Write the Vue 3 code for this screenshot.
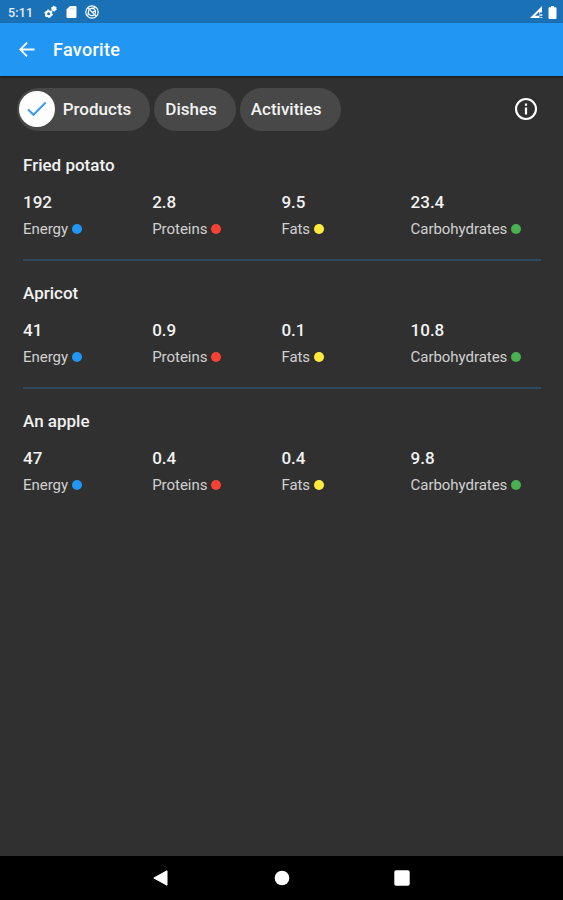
<script setup>
import { ref } from 'vue';

const tabs = ['Products', 'Dishes', 'Activities'];
const activeTab = ref('Products');

// Nutrients shown for every product, in column order
const nutrients = [
    { key: 'energy', label: 'Energy' },
    { key: 'proteins', label: 'Proteins' },
    { key: 'fats', label: 'Fats' },
    { key: 'carbohydrates', label: 'Carbohydrates' }
];

const products = ref([
    { name: 'Fried potato', energy: '192', proteins: '2.8', fats: '9.5', carbohydrates: '23.4' },
    { name: 'Apricot', energy: '41', proteins: '0.9', fats: '0.1', carbohydrates: '10.8' },
    { name: 'An apple', energy: '47', proteins: '0.4', fats: '0.4', carbohydrates: '9.8' }
]);
</script>

<template>
    <div class="screen">
        <div class="status-bar">
            <span class="clock">5:11</span>
            <!-- gears -->
            <svg class="gears" width="14" height="14" viewBox="0 0 14 14">
                <circle cx="4.600" cy="8.700" r="2.500" fill="none" stroke="#fff" stroke-width="2" />
                <circle cx="4.600" cy="8.700" r="3.700" fill="none" stroke="#fff" stroke-width="1.200" stroke-dasharray="1.900 1.970" />
                <circle cx="9.900" cy="3.700" r="1.500" fill="#d3e4f2" stroke="#fff" stroke-width="1.700" />
                <circle cx="9.900" cy="3.700" r="2.500" fill="none" stroke="#fff" stroke-width="1" stroke-dasharray="1.400 1.220" />
            </svg>
            <!-- memory card -->
            <svg class="card" width="11" height="12" viewBox="0 0 11 12">
                <path d="M4 0h5.500Q10.500 0 10.500 1v10q0 1-1 1h-8q-1 0-1-1V3.500z" fill="#fff" />
                <path d="M4.200 2v1.700M6.200 2v1.700M8.200 2v1.700" stroke="#b9d4ea" stroke-width=".8" />
            </svg>
            <svg class="globe" width="14" height="14" viewBox="0 0 14 14" fill="none" stroke="#fff">
                <circle cx="7" cy="7" r="6.200" stroke-width="1.200" />
                <circle cx="7" cy="7" r="3.600" stroke-width="1.100" />
                <path d="M2.500 2.500l9 9M6 3.500l4.500-.8M3.500 6.500l-.5 4M7.500 7.500l3-2" stroke-width="1.200" />
            </svg>
            <svg class="signal" width="13" height="13" viewBox="0 0 13 13">
                <path d="M0 12L12 0v6.500H9.500V12z" fill="#fff" />
                <path d="M5 9.700l4-4v4z" fill="#1b71b6" />
                <path d="M10.300 8l2 2m0-2l-2 2M10.300 11.500h2" stroke="#fff" stroke-width=".9" />
            </svg>
            <svg class="battery" width="9" height="13" viewBox="0 0 9 13">
                <path d="M3 0h3v1.300h1.500q1 0 1 1V12q0 1-1 1h-6q-1 0-1-1V2.300q0-1 1-1H3z" fill="#fff" />
            </svg>
        </div>

        <header class="app-bar">
            <svg class="back" width="16" height="16" viewBox="0 0 16 16" fill="none" stroke="#fff" stroke-width="1.900">
                <path d="M15.500 7.500H2M8 .7L1.300 7.500 8 14.300" />
            </svg>
            <h1>Favorite</h1>
        </header>

        <div class="filters">
            <button
                v-for="tab in tabs"
                :key="tab"
                class="chip"
                :class="{ selected: tab === activeTab }"
                @click="activeTab = tab"
            >
                <span v-if="tab === activeTab" class="check">
                    <svg width="20" height="16" viewBox="0 0 20 16" fill="none" stroke="#3a9af0" stroke-width="2">
                        <path d="M1 8.500l5.500 5.300L18.700 1.500" />
                    </svg>
                </span>
                <span class="chip-text">{{ tab }}</span>
            </button>
            <svg class="info" width="24" height="24" viewBox="0 0 24 24">
                <circle cx="12" cy="12" r="10" fill="none" stroke="#fff" stroke-width="2.100" />
                <path d="M10.900 6.500h2.200v2.200h-2.200zM10.900 10.500h2.200v7h-2.200z" fill="#fff" />
            </svg>
        </div>

        <main class="list">
            <section v-for="product in products" :key="product.name" class="product">
                <h2>{{ product.name }}</h2>
                <div class="nutrients">
                    <div v-for="nutrient in nutrients" :key="nutrient.key">
                        <div class="value">{{ product[nutrient.key] }}</div>
                        <div class="label">
                            <span>{{ nutrient.label }}</span>
                            <i class="dot" :class="nutrient.key"></i>
                        </div>
                    </div>
                </div>
            </section>
        </main>

        <nav class="nav-bar">
            <svg width="16" height="16" viewBox="0 0 16 16"><path d="M14 .8v14.400L.8 8z" fill="#fff" stroke="#fff" stroke-linejoin="round" /></svg>
            <svg width="16" height="16" viewBox="0 0 16 16"><circle cx="8" cy="8" r="7.300" fill="#fff" /></svg>
            <svg width="16" height="16" viewBox="0 0 16 16"><rect x=".3" y=".3" width="15.400" height="15.400" rx="1.800" fill="#fff" /></svg>
        </nav>
    </div>
</template>

<style>
body {
    margin: 0;
    background: #303030;
}
</style>

<style scoped>
.screen {
    display: flex;
    flex-direction: column;
    height: 900px;
    box-sizing: border-box;
    background: #303030;
    color: #fff;
    font-family: Roboto, "Noto Sans", sans-serif;
    overflow: hidden;
}

.status-bar {
    display: flex;
    align-items: center;
    flex: none;
    height: 23px;
    padding: 1px 6px 0 8px;
    box-sizing: border-box;
    background: #1b71b6;
}

.clock {
    width: 36px;
    font-size: 12.5px;
    font-weight: 500;
    letter-spacing: 0.2px;
    color: #e4eef7;
}

.card {
    margin-left: 7.5px;
}

.globe {
    margin-left: 8.5px;
}

.signal {
    margin-left: auto;
}

.battery {
    margin-left: 5px;
}

.app-bar {
    display: flex;
    align-items: center;
    flex: none;
    height: 53px;
    padding-left: 19px;
    box-sizing: border-box;
    background: #2196f3;
    box-shadow: 0 1px 2px rgba(0, 0, 0, 0.6);
    z-index: 1;
}

h1 {
    margin: 0 0 0 18px;
    font-size: 18px;
    font-weight: 500;
    letter-spacing: 0.3px;
}

.filters {
    display: flex;
    align-items: center;
    flex: none;
    gap: 4px;
    height: 43px;
    margin-top: 11.5px;
    padding: 0 25px 0 17px;
}

.chip {
    display: flex;
    align-items: center;
    height: 43px;
    padding: 0 19px 1px 11px;
    border: 0;
    border-radius: 22px;
    background: #484848;
    color: #f2f2f2;
    font: 500 17px Roboto, "Noto Sans", sans-serif;
}

.chip.selected {
    padding-left: 2px;
    padding-bottom: 0;
}

.chip.selected .chip-text {
    padding-bottom: 1px;
}

.check {
    display: flex;
    align-items: center;
    justify-content: center;
    width: 36px;
    height: 36px;
    margin-right: 7.7px;
    border-radius: 50%;
    background: #fff;
}

.info {
    margin-left: auto;
}

.list {
    flex: 1;
    margin-top: 2.5px;
    padding: 0 22.5px 0 23px;
}

.product {
    height: 128.2px;
    padding-top: 21px;
    box-sizing: border-box;
    border-bottom: 2px solid #2e4a61;
}

.product:last-child {
    border-bottom: 0;
}

h2 {
    margin: 0;
    color: #f2f2f2;
    font-size: 17px;
    line-height: 22px;
    font-weight: 500;
}

.nutrients {
    display: grid;
    grid-template-columns: repeat(4, 129.2px);
    margin-top: 15px;
}

.value {
    color: #f2f2f2;
    font-size: 17px;
    line-height: 22px;
    font-weight: 500;
}

.label {
    display: flex;
    align-items: center;
    gap: 4px;
    margin-top: 5px;
    font-size: 15px;
    line-height: 22px;
    letter-spacing: -0.04px;
    color: #d0d0d0;
}

.dot {
    width: 10px;
    height: 10px;
    border-radius: 50%;
}

.dot.energy {
    background: #2196f3;
}

.dot.proteins {
    background: #f44336;
}

.dot.fats {
    background: #ffeb3b;
}

.dot.carbohydrates {
    background: #4caf50;
}

.nav-bar {
    display: flex;
    align-items: center;
    justify-content: center;
    gap: 104.5px;
    flex: none;
    height: 44.5px;
    background: #000;
}
</style>
